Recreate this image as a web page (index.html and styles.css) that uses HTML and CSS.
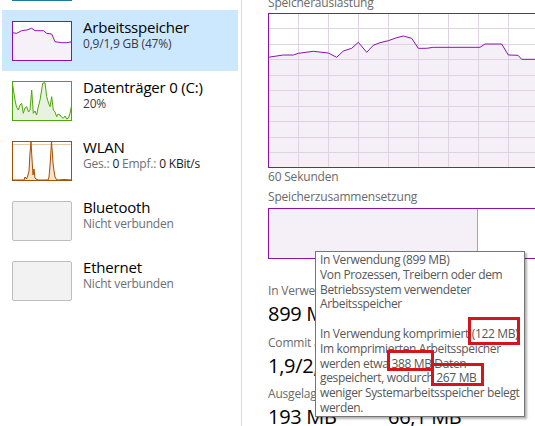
FILE: index.html
```html
<!DOCTYPE html>
<html lang="de">
<head>
<meta charset="utf-8">
<title>Task-Manager – Arbeitsspeicher</title>
<link rel="stylesheet" href="styles.css">
</head>
<body>
<div class="app">
  <aside class="sidebar">
    <ul class="perf-list">
      <li class="perf-item">
        <svg class="thumb" viewBox="0 0 60 40" width="60" height="40">
          <rect x="0.5" y="0.5" width="59" height="39" fill="#fff" stroke="#1a7f9e"/>
        </svg>
        <div class="perf-text">
          <div class="perf-title">CPU</div>
          <div class="perf-sub">12% 1,80 GHz</div>
        </div>
      </li>
      <li class="perf-item selected">
        <svg class="thumb" viewBox="0 0 60 40" width="60" height="40">
          <rect x="0.5" y="0.5" width="59" height="39" fill="#fff"/>
          <polygon fill="#f7f0f9" points="0,11.7 4.7,12.3 9.7,9.7 14.7,9 19.7,7.3 23,9.7 31.3,9.7 34.7,12.3 39.7,13 43,20.7 49.7,21.7 54.7,21.7 60,20.7 60,40 0,40"/>
          <polyline fill="none" stroke="#8b12ae" stroke-width="1" points="0,11.7 4.7,12.3 9.7,9.7 14.7,9 19.7,7.3 23,9.7 31.3,9.7 34.7,12.3 39.7,13 43,20.7 49.7,21.7 54.7,21.7 60,20.7"/>
          <rect x="0.5" y="0.5" width="59" height="39" fill="none" stroke="#8b12ae"/>
        </svg>
        <div class="perf-text">
          <div class="perf-title">Arbeitsspeicher</div>
          <div class="perf-sub">0,9/1,9 GB (47%)</div>
        </div>
      </li>
      <li class="perf-item">
        <svg class="thumb" viewBox="0 0 60 40" width="60" height="40">
          <rect x="0.5" y="0.5" width="59" height="39" fill="#fff"/>
          <polygon fill="#e8f3df" points="0.7,4 3,19 4.5,26 6.3,29 8,24 9.7,22.3 11.3,32.3 13,27 14.7,25.7 16.5,31 18,29 19.7,9 21.3,32.3 23,30 24.7,34 26,27 28,19 30.7,2.3 33,1.7 34.7,15.7 36.5,22 38,25.7 39.7,15.7 41.3,29 43,31 44.7,35.7 46,33 48,34 49.5,36 51.3,37.3 53,35 54.7,38 56.5,37 58,32.3 59.7,24 60,40 0,40"/>
          <polyline fill="none" stroke="#4da60c" stroke-width="1" points="0.7,4 3,19 4.5,26 6.3,29 8,24 9.7,22.3 11.3,32.3 13,27 14.7,25.7 16.5,31 18,29 19.7,9 21.3,32.3 23,30 24.7,34 26,27 28,19 30.7,2.3 33,1.7 34.7,15.7 36.5,22 38,25.7 39.7,15.7 41.3,29 43,31 44.7,35.7 46,33 48,34 49.5,36 51.3,37.3 53,35 54.7,38 56.5,37 58,32.3 59.7,24"/>
          <rect x="0.5" y="0.5" width="59" height="39" fill="none" stroke="#4da60c"/>
        </svg>
        <div class="perf-text">
          <div class="perf-title">Datenträger 0 (C:)</div>
          <div class="perf-sub">20%</div>
        </div>
      </li>
      <li class="perf-item">
        <svg class="thumb" viewBox="0 0 60 40" width="60" height="40">
          <rect x="0.5" y="0.5" width="59" height="39" fill="#fff"/>
          <line x1="0" y1="3.5" x2="60" y2="3.5" stroke="#e9c9a9" stroke-width="1"/>
          <polygon fill="#f6e3d0" points="0,39 12,39 13,36 14.5,38 16,34 17,30 18,12 19,0.5 20,18 21,34 22,28 23,37 24,38 26,39 36,39 37,36 38,25 39.5,0.5 40.5,14 41,22 42,30 43,36 44,38 46,39 52,38.5 60,39 60,40 0,40"/>
          <polyline fill="none" stroke="#a74f01" stroke-width="1" points="0,39 12,39 13,36 14.5,38 16,34 17,30 18,12 19,0.5 20,18 21,34 22,28 23,37 24,38 26,39 36,39 37,36 38,25 39.5,0.5 40.5,14 41,22 42,30 43,36 44,38 46,39 52,38.5 60,39"/>
          <rect x="0.5" y="0.5" width="59" height="39" fill="none" stroke="#a74f01"/>
        </svg>
        <div class="perf-text">
          <div class="perf-title">WLAN</div>
          <div class="perf-sub">Ges.: <span class="perf-num">0</span> Empf.: <span class="perf-num">0 KBit/s</span></div>
        </div>
      </li>
      <li class="perf-item">
        <div class="thumb thumb-empty"></div>
        <div class="perf-text">
          <div class="perf-title">Bluetooth</div>
          <div class="perf-sub muted">Nicht verbunden</div>
        </div>
      </li>
      <li class="perf-item">
        <div class="thumb thumb-empty"></div>
        <div class="perf-text">
          <div class="perf-title">Ethernet</div>
          <div class="perf-sub muted">Nicht verbunden</div>
        </div>
      </li>
    </ul>
  </aside>

  <main class="content">
    <div class="chart-label top-label">Speicherauslastung</div>
    <div class="usage-graph">
      <svg viewBox="0 0 298 153" width="298" height="153">
        <polygon fill="#f5eff7" points="-1,43.3 14.3,41 24.3,41 29.3,39.3 44.3,37.3 59.3,39 67.7,43.3 74.3,37 82.7,34.3 89.3,28.3 97.7,38.3 104.3,31.3 111,28.7 119.3,26.7 127.7,23.7 134.3,22 142.7,24.3 149.3,34.3 157.7,34.3 164.3,33.3 211,33.3 216,30 232.7,30 239.3,41 249,41.3 252.7,45.3 299,45.3 299,154 -1,154"/>
        <g stroke="#ddd3e1" stroke-width="1" shape-rendering="crispEdges">
          <line x1="29.5" y1="0" x2="29.5" y2="153"/>
          <line x1="59.5" y1="0" x2="59.5" y2="153"/>
          <line x1="89.5" y1="0" x2="89.5" y2="153"/>
          <line x1="119.5" y1="0" x2="119.5" y2="153"/>
          <line x1="149.5" y1="0" x2="149.5" y2="153"/>
          <line x1="179.5" y1="0" x2="179.5" y2="153"/>
          <line x1="209.5" y1="0" x2="209.5" y2="153"/>
          <line x1="239.5" y1="0" x2="239.5" y2="153"/>
          <line x1="269.5" y1="0" x2="269.5" y2="153"/>
          <line x1="0" y1="14.5" x2="298" y2="14.5"/>
          <line x1="0" y1="30" x2="298" y2="30"/>
          <line x1="0" y1="45.5" x2="298" y2="45.5"/>
          <line x1="0" y1="61" x2="298" y2="61"/>
          <line x1="0" y1="76.5" x2="298" y2="76.5"/>
          <line x1="0" y1="92" x2="298" y2="92"/>
          <line x1="0" y1="107.5" x2="298" y2="107.5"/>
          <line x1="0" y1="123" x2="298" y2="123"/>
          <line x1="0" y1="138.5" x2="298" y2="138.5"/>
        </g>
        <polyline fill="none" stroke="#8b12ae" stroke-width="1" points="-1,43.3 14.3,41 24.3,41 29.3,39.3 44.3,37.3 59.3,39 67.7,43.3 74.3,37 82.7,34.3 89.3,28.3 97.7,38.3 104.3,31.3 111,28.7 119.3,26.7 127.7,23.7 134.3,22 142.7,24.3 149.3,34.3 157.7,34.3 164.3,33.3 211,33.3 216,30 232.7,30 239.3,41 249,41.3 252.7,45.3 299,45.3"/>
      </svg>
    </div>
    <div class="axis-label">60 Sekunden</div>
    <div class="chart-label comp-label">Speicherzusammensetzung</div>
    <div class="composition">
      <div class="seg seg-used"></div>
      <div class="seg seg-standby"></div>
    </div>
    <div class="stats">
      <div class="stat">
        <div class="stat-label">In Verwendung (komprimiert)</div>
        <div class="stat-value">899 MB (122 MB)</div>
      </div>
      <div class="stat">
        <div class="stat-label">Verfügbar</div>
        <div class="stat-value">1,0 GB</div>
      </div>
      <div class="stat">
        <div class="stat-label">Commit ausgeführt</div>
        <div class="stat-value">1,9/2,8 GB</div>
      </div>
      <div class="stat">
        <div class="stat-label">Im Cache</div>
        <div class="stat-value">1,0 GB</div>
      </div>
      <div class="stat">
        <div class="stat-label">Ausgelagerter Pool</div>
        <div class="stat-value">193 MB</div>
      </div>
      <div class="stat">
        <div class="stat-label">Nicht ausgelagerter Pool</div>
        <div class="stat-value">66,1 MB</div>
      </div>
    </div>
  </main>

  <div class="tooltip">
    In Verwendung (899 MB)<br>
    Von Prozessen, Treibern oder dem<br>
    Betriebssystem verwendeter<br>
    Arbeitsspeicher<br>
    <br>
    In Verwendung komprimiert <span class="mark mark-a">(122 MB)</span><br>
    Im komprimierten Arbeitsspeicher<br>
    werden etwa <span class="mark mark-b">388 MB</span> Daten<br>
    gespeichert, wodurch <span class="mark mark-c">267 MB</span><br>
    weniger Systemarbeitsspeicher belegt<br>
    werden.
  </div>
</div>
</body>
</html>
```

FILE: styles.css
```css
html, body {
  margin: 0;
  padding: 0;
  width: 535px;
  height: 426px;
  overflow: hidden;
  background: #fff;
}

body {
  font-family: "Open Sans", "Noto Sans", "Liberation Sans", sans-serif;
  color: #000;
}

.app {
  position: relative;
  display: flex;
  width: 535px;
  height: 426px;
}

/* ---------- sidebar ---------- */
.sidebar {
  flex: 0 0 241px;
  width: 241px;
  border-right: 1px solid #dadada;
  height: 426px;
}

.perf-list {
  list-style: none;
  margin: -50px 0 0 2px;
  padding: 0;
  width: 236px;
}

.perf-item {
  display: flex;
  align-items: flex-start;
  gap: 11px;
  height: 60px;
  padding: 0 0 0 10px;
  box-sizing: border-box;
}

.perf-item.selected {
  background: #cce8ff;
  height: 61px;
  margin-bottom: -1px;
}

.thumb {
  flex: 0 0 60px;
  width: 60px;
  height: 40px;
  margin-top: 11px;
  display: block;
  box-sizing: border-box;
}

.thumb-empty {
  background: #f2f2f2;
  border: 1px solid #bdbdbd;
  border-radius: 2px;
}

.perf-text {
  padding-top: 8px;
  white-space: nowrap;
}

.perf-title {
  font-size: 15px;
  line-height: 18px;
  letter-spacing: -0.2px;
  color: #000;
}

.perf-sub {
  font-size: 12px;
  line-height: 16px;
  letter-spacing: -0.2px;
  color: #3c3c3c;
}

.perf-sub.muted {
  color: #6e6e6e;
}

.perf-item:nth-child(4) .perf-sub {
  color: #707070;
}

.perf-num {
  color: #1a1a1a;
}

/* ---------- content ---------- */
.content {
  flex: 0 0 auto;
  padding-left: 26px;
  width: 320px;
}

.chart-label,
.axis-label {
  font-size: 12px;
  line-height: 16px;
  letter-spacing: -0.2px;
  color: #6a6a6a;
  white-space: nowrap;
}

.top-label {
  margin-top: -5px;
}

.usage-graph {
  margin-top: 2px;
  width: 300px;
  height: 155px;
  box-sizing: border-box;
  border: 1px solid #8b12ae;
  background: #fff;
}

.usage-graph svg {
  display: block;
}

.axis-label {
  margin-top: 1px;
}

.comp-label {
  margin-top: 4px;
}

.composition {
  margin-top: 3px;
  width: 300px;
  height: 51px;
  box-sizing: border-box;
  border: 1px solid #8b12ae;
  display: flex;
}

.seg-used {
  width: 208px;
  background: #f5eff7;
  border-right: 1px solid #a6a6a6;
}

.seg-standby {
  flex: 1;
  background: #fff;
}

.stats {
  margin-top: 24px;
  display: grid;
  grid-template-columns: 120px 120px;
  row-gap: 7.5px;
}

.stat {
  overflow: hidden;
}

.stat-label {
  font-size: 12px;
  line-height: 16px;
  letter-spacing: -0.2px;
  color: #6a6a6a;
  white-space: nowrap;
  overflow: hidden;
}

.stat-value {
  margin-top: 2px;
  font-size: 20px;
  line-height: 26px;
  letter-spacing: -0.3px;
  color: #000;
  white-space: nowrap;
  overflow: hidden;
}

/* ---------- tooltip ---------- */
.tooltip {
  position: absolute;
  left: 315px;
  top: 251px;
  width: 210px;
  height: 166px;
  box-sizing: border-box;
  padding: 1px 4px;
  background: #fff;
  border: 1px solid #767676;
  box-shadow: 2px 2px 2px rgba(0, 0, 0, 0.3);
  font-size: 12px;
  line-height: 14.8px;
  letter-spacing: -0.35px;
  color: #575757;
  white-space: nowrap;
  z-index: 2;
}

.mark {
  position: relative;
}

.mark::after {
  content: "";
  position: absolute;
  border: 3px solid #d4151c;
  box-sizing: border-box;
}

.mark-a::after {
  left: -4px;
  right: -2px;
  top: -8px;
  bottom: -3px;
}

.mark-b::after {
  left: -4px;
  right: -2px;
  top: -5px;
  bottom: 1px;
}

.mark-c::after {
  left: -5px;
  right: -7px;
  top: -6px;
  bottom: 0px;
}
```
